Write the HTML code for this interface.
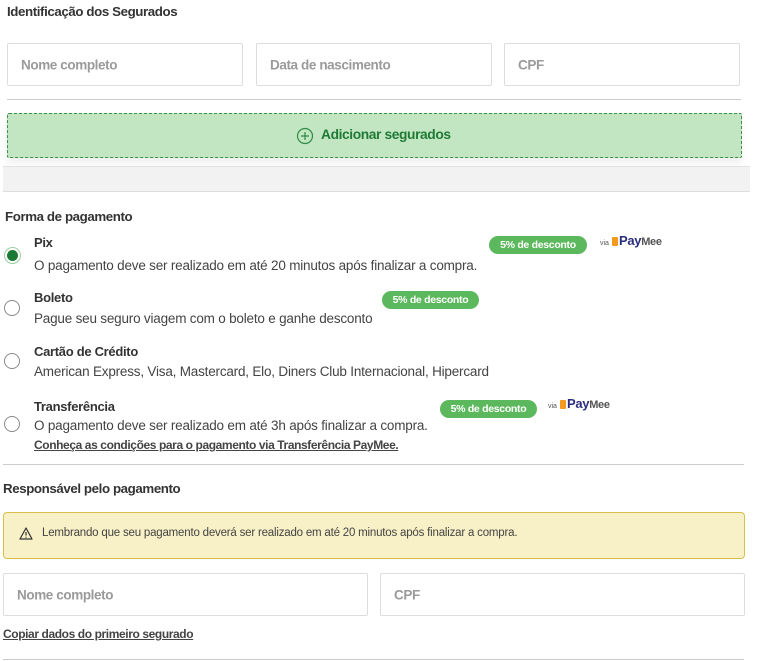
<!DOCTYPE html>
<html><head><meta charset="utf-8"><style>
body{margin:0;width:757px;height:661px;background:#fff;position:relative;overflow:hidden;font-family:"Liberation Sans",sans-serif;color:#333}
.a{position:absolute;white-space:nowrap}
.h{font-weight:bold;font-size:13.3px;color:#333;letter-spacing:-0.4px}
.in{position:absolute;border:1px solid #ddd;border-radius:2px;box-sizing:border-box;background:#fff}
.in span{position:absolute;left:13px;top:50%;transform:translateY(-50%);font-size:13.5px;font-weight:bold;color:#9a9a9a;letter-spacing:-0.4px}
.line{position:absolute;height:1px;background:#ccc}
.t{font-size:13px;font-weight:bold;color:#333;letter-spacing:-0.3px}
.d{font-size:13.5px;color:#444;letter-spacing:-0.2px}
.badge{position:absolute;height:18px;border-radius:9px;background:#5cb85c;color:#fff;font-size:10.5px;font-weight:bold;line-height:18px;text-align:center;letter-spacing:-0.3px}
.radio{position:absolute;width:16px;height:16px;border:1px solid #888;border-radius:50%;box-sizing:border-box}
.pm{position:absolute;font-size:7px;color:#555}
.pm b{font-size:13px;color:#2b2d7d;letter-spacing:-0.3px}
.pm i{display:inline-block;width:6px;height:9px;background:#f39b1f;border-radius:1px;margin:0 1px 0 3px;vertical-align:-1px}
</style></head><body>
<div class="a h" style="left:7px;top:4px">Identificação dos Segurados</div>
<div class="in" style="left:7px;top:43px;width:236px;height:43px"><span>Nome completo</span></div>
<div class="in" style="left:256px;top:43px;width:236px;height:43px"><span>Data de nascimento</span></div>
<div class="in" style="left:504px;top:43px;width:236px;height:43px"><span>CPF</span></div>
<div class="line" style="left:7px;top:99px;width:734px"></div>
<div style="position:absolute;left:7px;top:113px;width:735px;height:45px;box-sizing:border-box;background:#c3e6c2;border:1.5px dashed #3d8d4b;border-radius:2px;box-shadow:0 6px 8px rgba(0,0,0,.06)"></div>
<svg class="a" style="left:296px;top:127px" width="18" height="18" viewBox="0 0 18 18"><circle cx="9" cy="9" r="7.5" fill="none" stroke="#2f8a45" stroke-width="1.2"/><path d="M9 5v8M5 9h8" stroke="#2f8a45" stroke-width="1.2"/></svg>
<div class="a" style="left:321px;top:127px;font-size:13.8px;font-weight:bold;color:#1f7a35;letter-spacing:-0.4px">Adicionar segurados</div>
<div style="position:absolute;left:3px;top:166px;width:747px;height:24px;background:#f2f2f2;border-top:1px solid #e2e2e2;border-bottom:1px solid #ddd"></div>
<div class="a h" style="left:5px;top:209px">Forma de pagamento</div>

<div style="position:absolute;left:4px;top:247px;width:17px;height:17px;border-radius:50%;border:1.5px solid #9ccf9f;box-sizing:border-box"></div>
<div style="position:absolute;left:7px;top:250px;width:11px;height:11px;border-radius:50%;background:#1a7a35"></div>
<div class="a t" style="left:34px;top:235px">Pix</div>
<div class="a d" style="left:34px;top:258px">O pagamento deve ser realizado em até 20 minutos após finalizar a compra.</div>
<div class="badge" style="left:489px;top:236px;width:98px">5% de desconto</div>
<div class="pm" style="left:600px;top:233px">via<i></i><b>Pay</b><b style="color:#555;font-size:11px">Mee</b></div>

<div class="radio" style="left:4px;top:300px"></div>
<div class="a t" style="left:34px;top:290px">Boleto</div>
<div class="a d" style="left:34px;top:311px">Pague seu seguro viagem com o boleto e ganhe desconto</div>
<div class="badge" style="left:382px;top:291px;width:97px">5% de desconto</div>

<div class="radio" style="left:4px;top:353px"></div>
<div class="a t" style="left:34px;top:344px">Cartão de Crédito</div>
<div class="a d" style="left:34px;top:364px">American Express, Visa, Mastercard, Elo, Diners Club Internacional, Hipercard</div>

<div class="radio" style="left:4px;top:416px"></div>
<div class="a t" style="left:34px;top:399px">Transferência</div>
<div class="a d" style="left:34px;top:418px">O pagamento deve ser realizado em até 3h após finalizar a compra.</div>
<div class="a" style="left:34px;top:438px;font-size:12px;font-weight:bold;color:#444;text-decoration:underline;letter-spacing:-0.4px">Conheça as condições para o pagamento via Transferência PayMee.</div>
<div class="badge" style="left:440px;top:400px;width:97px">5% de desconto</div>
<div class="pm" style="left:548px;top:396px">via<i></i><b>Pay</b><b style="color:#555;font-size:11px">Mee</b></div>

<div class="line" style="left:3px;top:464px;width:741px"></div>
<div class="a h" style="left:3px;top:481px">Responsável pelo pagamento</div>
<div style="position:absolute;left:3px;top:512px;width:742px;height:47px;box-sizing:border-box;background:#f8f0c6;border:1.5px solid #d6bf4c;border-radius:4px"></div>
<svg class="a" style="left:19px;top:527px" width="14" height="13" viewBox="0 0 14 13"><path d="M7 1L13 12H1Z" fill="none" stroke="#333" stroke-width="1.2" stroke-linejoin="round"/><path d="M7 5v3.5M7 9.8v1" stroke="#333" stroke-width="1.2"/></svg>
<div class="a" style="left:42px;top:527px;font-size:11.5px;color:#444;letter-spacing:-0.2px">Lembrando que seu pagamento deverá ser realizado em até 20 minutos após finalizar a compra.</div>
<div class="in" style="left:3px;top:573px;width:365px;height:43px"><span>Nome completo</span></div>
<div class="in" style="left:380px;top:573px;width:365px;height:43px"><span>CPF</span></div>
<div class="a" style="left:3px;top:627px;font-size:12px;font-weight:bold;color:#444;text-decoration:underline;letter-spacing:-0.4px">Copiar dados do primeiro segurado</div>
<div class="line" style="left:3px;top:659px;width:741px"></div>
</body></html>
